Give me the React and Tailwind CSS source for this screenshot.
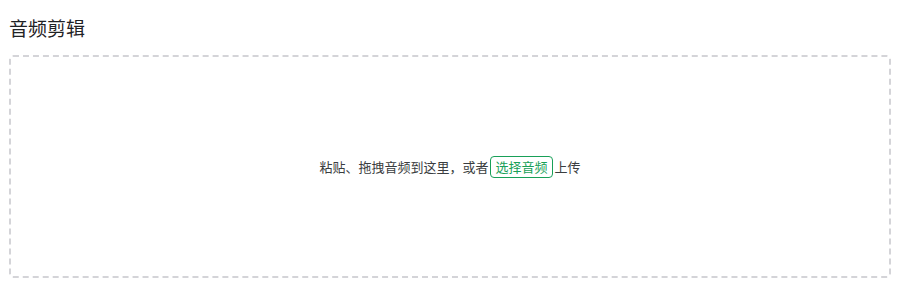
export default function App() {
  return (
    <div
      className="bg-white w-[900px] h-[303px] px-[9px] pt-[14px] text-[#333639]"
      style={{ fontFamily: '"Noto Sans CJK SC", "Noto Sans", sans-serif' }}
    >
      <h2 className="text-[19px] leading-[28px] font-normal text-[#1f2225]">音频剪辑</h2>
      <div className="mt-[13px] h-[223px] border-2 border-dashed border-[#d4d4d8] rounded-[4px] flex items-center justify-center">
        <div className="flex items-center text-[13px] text-[#3a3d40]">
          <span>粘贴、拖拽音频到这里，或者</span>
          <button className="mx-[2px] h-[22px] px-[4px] border border-[#18a058] rounded-[4px] text-[#18a058] text-[13px] leading-[20px]">
            选择音频
          </button>
          <span>上传</span>
        </div>
      </div>
    </div>
  );
}
